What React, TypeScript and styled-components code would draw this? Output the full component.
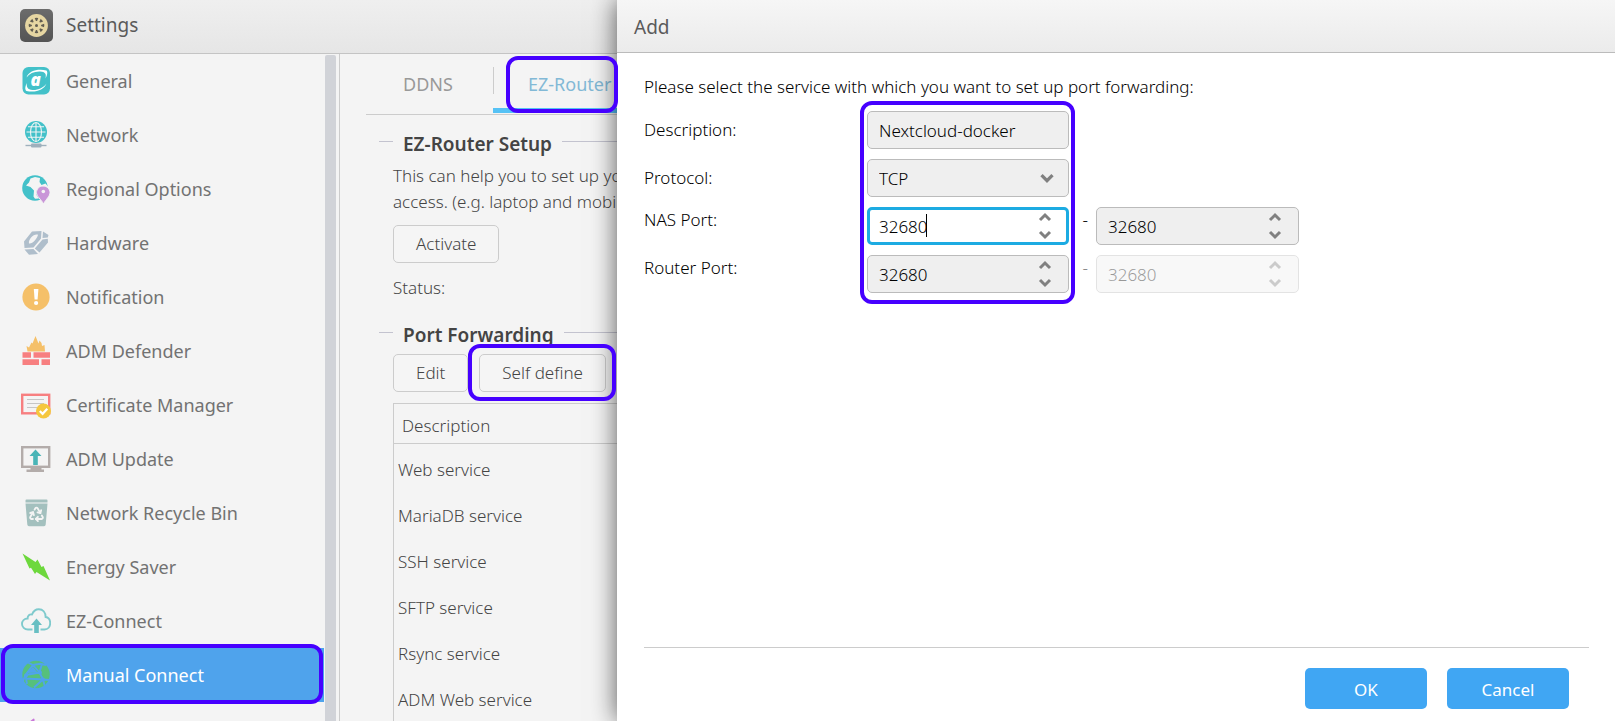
import React from 'react';
import styled, { createGlobalStyle, css } from 'styled-components';
import { Recycle } from 'lucide-react';

const GlobalStyle = createGlobalStyle`
  *, *::before, *::after { box-sizing: border-box; }
  body {
    margin: 0;
    overflow: hidden;
    background: #f4f4f4;
    color: #444;
    font-family: "Noto Sans", "Open Sans", sans-serif;
    font-size: 17px;
    font-weight: 350;
    line-height: 26px;
  }
  button, input, select { font: inherit; color: inherit; }
`;

/* ---------- shell ---------- */

const Desktop = styled.div`
  display: flex;
  height: 100vh;
`;

const SettingsWindow = styled.section`
  display: flex;
  flex-direction: column;
  flex: 0 0 617px;
  min-width: 0;
  overflow: clip;
  overflow-clip-margin: 2px;
`;

const SettingsHeader = styled.header`
  display: flex;
  align-items: center;
  gap: 13px;
  flex: 0 0 54px;
  padding: 0 20px 3px;
  border-bottom: 1px solid #c4c4c4;
  background: linear-gradient(#efefef, #e6e6e6);
`;

const WindowTitle = styled.h1`
  margin: 0;
  font-size: 19px;
  font-weight: 390;
  color: #5a5a5a;
`;

const SettingsBody = styled.div`
  display: flex;
  flex: 1;
  min-height: 0;
`;

const ring = css`
  border: 4px solid #4600ff;
  border-radius: 12px;
  pointer-events: none;
  z-index: 2;
`;

/* ---------- sidebar ---------- */

const Sidebar = styled.nav`
  display: flex;
  flex: 0 0 340px;
  border-right: 1px solid #ccc;
  overflow: clip;
`;

const NavList = styled.ul`
  flex: 0 0 324px;
  margin: 0;
  padding: 0;
  list-style: none;
`;

const NavLink = styled.a<{ $active?: boolean }>`
  position: relative;
  display: flex;
  align-items: center;
  gap: 15px;
  height: 54px;
  padding-left: 21px;
  font-size: 18px;
  font-weight: 390;
  color: #727272;
  text-decoration: none;
  ${p => p.$active && css`
    background: #4fa3ec;
    color: #fff;
    &::after {
      content: '';
      position: absolute;
      inset: -4px 1px -2px;
      ${ring}
    }
  `}
`;

const NavIconRow = styled.li`
  padding: 12px 21px;
`;

const ScrollThumb = styled.div`
  flex: 0 0 11px;
  margin: 1px 0 0 1px;
  border-radius: 2px 2px 0 0;
  background: #d1d3d8;
`;

/* ---------- manual connect pane ---------- */

const Pane = styled.main`
  flex: 1 0 auto;
  width: 277px;
  padding-left: 26px;
`;

const Tabs = styled.div`
  display: flex;
  height: 61px;
  border-bottom: 1px solid #ccc;
`;

const Tab = styled.button<{ $active?: boolean }>`
  position: relative;
  flex: ${p => (p.$active ? '1 0 124px' : '0 0 127px')};
  padding: 6px 0 0 ${p => (p.$active ? '35px' : '37px')};
  border: 0;
  border-bottom: ${p => (p.$active ? '5px solid #56c2f5' : '5px solid transparent')};
  margin-bottom: 1px;
  background: linear-gradient(#ccc, #ccc) no-repeat 0 13px / ${p => (p.$active ? '1px 27px' : '0 0')};
  font-size: 18px;
  font-weight: 390;
  text-align: left;
  white-space: nowrap;
  color: ${p => (p.$active ? '#82b9d6' : '#999')};
  ${p => p.$active && css`
    &::after {
      content: '';
      position: absolute;
      inset: 2px -1px -5px 13px;
      ${ring}
    }
  `}
`;

const Group = styled.section`
  padding: 17px 0 0 27px;
  white-space: nowrap;
  & + & { padding-top: 22px; }
`;

const GroupTitle = styled.h2`
  display: flex;
  align-items: center;
  gap: 10px;
  margin: 0 0 7px -14px;
  font-size: 19px;
  font-weight: 570;
  line-height: 24px;
  color: #444;
  &::before, &::after {
    content: '';
    flex: 1;
    border-top: 1px solid #c3c3cf;
    margin-bottom: 5px;
  }
  &::before { flex: 0 0 14px; }
`;

const Paragraph = styled.p`
  margin: 0;
`;

const Button = styled.button`
  height: 38px;
  padding: 0 22px;
  border: 1px solid #ccc;
  border-radius: 5px;
  background: #f5f5f5;
  color: #444;
`;

const ActivateRow = styled.div`
  padding: 10px 0 12px;
`;

const Toolbar = styled.div`
  display: flex;
  gap: 11px;
  margin-bottom: 11px;
`;

const Marked = styled.div`
  position: relative;
  &::after {
    content: '';
    position: absolute;
    inset: -10px -10px -9px -11px;
    ${ring}
  }
`;

const ServiceTable = styled.table`
  width: 100%;
  border: 1px solid #ccc;
  border-width: 1px 0 0 1px;
  border-spacing: 0;
  text-align: left;
  th {
    height: 40px;
    padding: 4px 8px 0;
    border-bottom: 1px solid #ccc;
    font-weight: inherit;
  }
  tbody::before {
    content: '';
    display: block;
    height: 3px;
  }
  td {
    height: 46px;
    padding: 0 4px;
  }
`;

/* ---------- dialog ---------- */

const Dialog = styled.form`
  position: relative;
  z-index: 1;
  display: flex;
  flex-direction: column;
  flex: 1;
  min-width: 0;
  background: #fff;
  box-shadow: 0 0 24px rgba(0, 0, 0, 0.65);
  color: #000;
`;

const DialogHeader = styled.header`
  flex: 0 0 53px;
  padding: 14px 17px 0;
  border-bottom: 1px solid #bbb;
  background: linear-gradient(#f6f6f6, #ebebeb);
`;

const DialogBody = styled.div`
  flex: 1;
  padding: 21px 26px 0 27px;
`;

const FormGrid = styled.div`
  display: grid;
  grid-template-columns: 223px 202px 27px 203px;
  grid-auto-rows: 38px;
  row-gap: 10px;
  margin-top: 11px;
`;

const Label = styled.label<{ $row: number; $raised?: boolean }>`
  grid-column: 1;
  grid-row: ${p => p.$row};
  line-height: ${p => (p.$raised ? 26 : 38)}px;
`;

const Dash = styled.span<{ $row: number; $dim?: boolean }>`
  grid-column: 3;
  grid-row: ${p => p.$row};
  padding-right: 8px;
  line-height: 26px;
  text-align: right;
  opacity: ${p => (p.$dim ? 0.5 : 1)};
`;

const FieldRing = styled.div`
  grid-column: 2;
  grid-row: 1 / 5;
  margin: -10px -6px -11px -7px;
  ${ring}
`;

const Field = styled.div<{ $row: number; $second?: boolean; $dim?: boolean }>`
  position: relative;
  grid-column: ${p => (p.$second ? 4 : 2)};
  grid-row: ${p => p.$row};
  display: flex;
  opacity: ${p => (p.$dim ? 0.4 : 1)};
`;

const control = css`
  width: 100%;
  min-width: 0;
  padding: 1px 11px 0;
  border: 1px solid #bbb;
  border-radius: 5px;
  background: #efefef;
  outline: none;
`;

const TextInput = styled.input<{ $focused?: boolean }>`
  ${control}
  ${p => p.$focused && css`
    padding: 1px 9px 0;
    border: 3px solid #1cabe2;
    background: #fff;
    caret-color: transparent;
  `}
`;

const Select = styled.select`
  ${control}
  appearance: none;
`;

const Caret = styled.span`
  position: absolute;
  top: 7px;
  left: 59px;
  width: 1px;
  height: 23px;
  background: #000;
`;

const Stepper = styled.span`
  position: absolute;
  top: 4px;
  right: 15px;
  display: flex;
  flex-direction: column;
  justify-content: space-between;
  height: 30px;
`;

const StepButton = styled.button`
  display: flex;
  padding: 1px 2px;
  border: 0;
  background: none;
`;

const SelectArrow = styled.span`
  position: absolute;
  top: 14px;
  right: 14px;
  display: flex;
  pointer-events: none;
`;

const DialogFooter = styled.footer`
  display: flex;
  justify-content: flex-end;
  gap: 20px;
  margin: 0 26px 0 27px;
  padding: 20px 20px 12px;
  border-top: 1px solid #ccc;
`;

const PrimaryButton = styled.button`
  width: 122px;
  height: 41px;
  padding-top: 3px;
  border: 0;
  border-radius: 5px;
  background: #40a6f3;
  color: #fff;
  font-weight: 390;
`;

/* ---------- icons ---------- */

const Icon = ({ children }: { children: React.ReactNode }) => (
  <svg width="30" height="30" viewBox="0 0 30 30" fill="none" aria-hidden="true">{children}</svg>
);

const TEAL = '#43c1c9';

const SettingsIcon = () => (
  <svg width="33" height="33" viewBox="0 0 33 33" aria-hidden="true">
    <defs>
      <linearGradient id="tile" x1="0" y1="0" x2="0" y2="1"><stop stopColor="#6c6c6c" /><stop offset="1" stopColor="#545454" /></linearGradient>
    </defs>
    <rect x="0" y="0" width="33" height="33" rx="5" fill="url(#tile)" />
    <circle cx="16.5" cy="16.5" r="11.4" fill="#e6d6a2" />
    <circle cx="16.5" cy="16.5" r="7.800" fill="#625e52" />
    <g stroke="#e6d6a2" strokeWidth="2.400">
      {[22.5, 67.5, 112.5, 157.5].map(a => (
        <path key={a} d="M16.5 7.5v18" transform={`rotate(${a} 16.5 16.5)`} />
      ))}
    </g>
    <circle cx="16.5" cy="16.5" r="4.600" fill="#e6d6a2" />
    <circle cx="16.5" cy="16.5" r="1.5" fill="#625e52" />
  </svg>
);

const GeneralIcon = () => (
  <Icon>
    <rect x="1.5" y="1" width="27.5" height="27.5" rx="6" fill={TEAL} />
    <text x="9.500" y="19.500" fill="#fff" fontFamily="Open Sans, sans-serif" fontWeight="800" fontStyle="italic" fontSize="17">a</text>
    <path d="M5.5 11.5C8 4.5 17 2.600 25.500 4.500C27 6 26.200 9.500 24.500 12.500C25.500 8 24.500 6 19 5.600C13 5.400 8.500 7.500 5.500 11.500Z" fill="#fff" />
    <path d="M25.500 17.500C23 24 15 26.800 5.500 25C3.500 23.600 4.200 20 6 17C5.200 21 6.500 23.600 11.500 24C17.500 24.200 22.500 21.500 25.500 17.500Z" fill="#fff" />
  </Icon>
);

const NetworkIcon = () => (
  <Icon>
    <circle cx="15" cy="12" r="11" fill={TEAL} />
    <g stroke="#f4f4f4" strokeWidth="1.100">
      <ellipse cx="15" cy="12" rx="5.500" ry="9.500" />
      <path d="M15 2.500v19M5.500 12h19M7 6.800h16M7 17.200h16" />
    </g>
    <path d="M4.500 25.500h21" stroke="#9fb0bc" strokeWidth="1.400" />
    <rect x="10" y="23.500" width="10.500" height="4" rx="1" fill="#9fb0bc" />
  </Icon>
);

const RegionalIcon = () => (
  <Icon>
    <circle cx="14" cy="14" r="12.800" fill={TEAL} />
    <path d="M9.500 4.500L14 3L19 4L18.500 8L20.500 11L24.500 9.500L27.500 13L20 14L15 17L15.500 21L18 24.500L14 24.800L12.500 22.500L13 16.500L9.500 13L5 11.500L8 8.500Z" fill="#f4f4f4" />
    <path d="M22 12C26 12 29 15 29 18.500C29 22.500 25 25 22.500 30C20 25 15.500 22.500 15.500 18.500C15.500 15 18 12 22 12Z" fill="#c996d8" stroke="#f4f4f4" strokeWidth="1" />
    <circle cx="22.300" cy="17.500" r="1.800" fill="#f4f4f4" />
  </Icon>
);

const HardwareIcon = () => (
  <Icon>
    <path fillRule="evenodd" fill="#afbecb" d="M3 13.500L11 3.500L20.500 3L20 10.500L12.500 19.500L3.500 20ZM8 15.500C11 16.500 16.500 10.500 17 6.800C13.500 5 7 11 8 15.500Z" />
    <path fill="#afbecb" d="M22 3.500L27.500 7L26.800 9.500L21.500 10ZM26.800 10.800L27 14.500L18.500 24.500L13.800 20.500L21.500 11.500ZM3.500 21.400L12.500 21L17 26L8 26.800Z" />
  </Icon>
);

const NotificationIcon = () => (
  <Icon>
    <circle cx="15" cy="15" r="13.600" fill="#f5c069" />
    <path d="M12.800 7h4.600l-.8 10.500h-3z" fill="#fff" />
    <circle cx="15.100" cy="21" r="2.100" fill="#fff" />
  </Icon>
);

const DefenderIcon = () => (
  <Icon>
    <path d="M6.500 15.500L5.500 10L8 11.500L10.500 6.500L11.500 7.500L14.500 0L17.500 7.500L18.500 4.500L20.500 7L21 10L23.500 9L24 15.500Z" fill="#f5c069" />
    <path d="M1.500 16.200h8.500v5.600h-8.500zM12.500 16.200h16.500v5.600h-16.500zM1.500 23.300h16.500v5.600h-16.500zM20.500 23.300h8.500v5.600h-8.500z" fill="#f77f80" />
  </Icon>
);

const CertificateIcon = () => (
  <Icon>
    <rect x="1.200" y="4.800" width="27" height="18.500" stroke="#f77f80" strokeWidth="2.400" />
    <path d="M6 9.500h17M6 13.500h17M6 17.500h10" stroke="#c6c6c6" strokeWidth="1.100" />
    <circle cx="22.500" cy="21" r="7.500" fill="#f5c73e" />
    <path d="M18.800 21l2.800 2.800 4.700-5" stroke="#fff" strokeWidth="2.200" />
  </Icon>
);

const UpdateIcon = () => (
  <Icon>
    <rect x="1.200" y="3.200" width="27" height="19.600" stroke="#b3acaa" strokeWidth="2.400" />
    <path d="M9.500 24h11v1.500h2.500v2.500h-17.500v-2.500h4z" fill="#b3acaa" />
    <path d="M14.500 5.500l6 6.500h-3.700v9h-4.600v-9h-3.700z" fill="#49b5b7" />
  </Icon>
);

const RecycleIcon = () => (
  <Icon>
    <path d="M4.500 2.500Q4.500 1.500 5.500 1.500h20Q26.500 1.500 26.500 2.500v2h-22zM4.500 5.400h22l-1.800 21.200Q24.500 28.200 23 28.200h-15Q6.500 28.200 6.300 26.600z" fill="#a3c0be" />
    <Recycle x={7} y={7.500} width={17} height={17} color="#f4f4f4" strokeWidth={2.600} />
  </Icon>
);

const EnergyIcon = () => (
  <Icon>
    <path d="M1.500 1.500L14.500 10L16.500 7.500L20.500 15L22.500 14L29 28.500L15.500 20L14 22L10 15.800L8.500 16.500Z" fill="#6dd83c" />
  </Icon>
);

const ConnectIcon = () => (
  <Icon>
    <path d="M11.500 23.500H7C3.500 23.500 1 21 1 18C1 15 3.300 12.500 6.600 12.500C6.600 9.500 8.500 8 11 8.500C12.300 5 14.800 3.200 17.800 3.200C21.800 3.200 24.600 6.200 24.600 11C27.500 11.500 29.200 14 29.200 17C29.200 20.800 26.800 23.500 23.500 23.500H19.500" stroke="#7fcacd" strokeWidth="1.900" />
    <path d="M15.500 12.500l5.500 6.500h-3.200v8h-4.600v-8h-3.200z" fill="#68bfc3" />
  </Icon>
);

const ManualIcon = () => (
  <Icon>
    <circle cx="15" cy="14.500" r="13.700" fill="#56c07c" />
    <g stroke="#4fa3ec" strokeWidth="1.900">
      <path d="M7 2.500L12 5L19 3.800L25 5M12 5L4.500 15L2 21M4.500 15L18.500 12.500L12 5M18.500 12.500L22 19.500L28 20M22 19.500L13 27.500M22 19.500L4.500 18.500M18.500 12.500L21 3.500M4.500 15L6 24M22 19.500L24 27" />
    </g>
    <path d="M6 13l6-6 4.500 5.500z" fill="#4fa3ec" />
    <circle cx="5" cy="15.500" r="1.900" fill="#4fa3ec" />
    <circle cx="19" cy="12.500" r="1.900" fill="#4fa3ec" />
    <circle cx="22" cy="19.500" r="1.900" fill="#4fa3ec" />
  </Icon>
);

const SpeakerIcon = () => (
  <Icon>
    <path d="M4 11L12.500 4.500L13.500 5V25L4 19Z" fill="#c977d8" />
  </Icon>
);

const Chevron = ({ up, large }: { up?: boolean; large?: boolean }) => (
  <svg width={large ? 16 : 14} height={large ? 11 : 10} viewBox="0 0 14 10" fill="none" aria-hidden="true">
    <path d={up ? 'M2 8l5-5 5 5' : 'M2 2l5 5 5-5'} stroke="#808080" strokeWidth="3" />
  </svg>
);

/* ---------- content ---------- */

const navItems: [string, React.ComponentType][] = [
  ['General', GeneralIcon],
  ['Network', NetworkIcon],
  ['Regional Options', RegionalIcon],
  ['Hardware', HardwareIcon],
  ['Notification', NotificationIcon],
  ['ADM Defender', DefenderIcon],
  ['Certificate Manager', CertificateIcon],
  ['ADM Update', UpdateIcon],
  ['Network Recycle Bin', RecycleIcon],
  ['Energy Saver', EnergyIcon],
  ['EZ-Connect', ConnectIcon],
  ['Manual Connect', ManualIcon],
];

const services = ['Web service', 'MariaDB service', 'SSH service', 'SFTP service', 'Rsync service', 'ADM Web service'];

interface PortFieldProps {
  id: string;
  row: number;
  second?: boolean;
  focused?: boolean;
  disabled?: boolean;
}

const PortField = ({ id, row, second, focused, disabled }: PortFieldProps) => (
  <Field $row={row} $second={second} $dim={disabled}>
    <TextInput
      id={id}
      aria-labelledby={`label-${row}`}
      inputMode="numeric"
      defaultValue="32680"
      disabled={disabled}
      $focused={focused}
    />
    {focused && <Caret />}
    <Stepper>
      <StepButton type="button" disabled={disabled}><Chevron up /></StepButton>
      <StepButton type="button" disabled={disabled}><Chevron /></StepButton>
    </Stepper>
  </Field>
);

export default function App() {
  return (
    <Desktop>
      <GlobalStyle />
      <SettingsWindow>
        <SettingsHeader>
          <SettingsIcon />
          <WindowTitle>Settings</WindowTitle>
        </SettingsHeader>
        <SettingsBody>
          <Sidebar>
            <NavList>
              {navItems.map(([name, Glyph]) => (
                <li key={name}>
                  <NavLink href="#" $active={name === 'Manual Connect'}>
                    <Glyph />
                    {name}
                  </NavLink>
                </li>
              ))}
              <NavIconRow><SpeakerIcon /></NavIconRow>
            </NavList>
            <ScrollThumb />
          </Sidebar>
          <Pane>
            <Tabs>
              <Tab type="button">DDNS</Tab>
              <Tab type="button" $active>EZ-Router</Tab>
            </Tabs>
            <Group>
              <GroupTitle>EZ-Router Setup</GroupTitle>
              <Paragraph>
                This can help you to set up yo
                <br />
                access. (e.g. laptop and mobi
              </Paragraph>
              <ActivateRow><Button type="button">Activate</Button></ActivateRow>
              <Paragraph>Status:</Paragraph>
            </Group>
            <Group>
              <GroupTitle>Port Forwarding</GroupTitle>
              <Toolbar>
                <Button type="button">Edit</Button>
                <Marked><Button type="button">Self define</Button></Marked>
              </Toolbar>
              <ServiceTable>
                <thead><tr><th scope="col">Description</th></tr></thead>
                <tbody>
                  {services.map(s => <tr key={s}><td>{s}</td></tr>)}
                </tbody>
              </ServiceTable>
            </Group>
          </Pane>
        </SettingsBody>
      </SettingsWindow>

      <Dialog>
        <DialogHeader><WindowTitle as="h2">Add</WindowTitle></DialogHeader>
        <DialogBody>
          <Paragraph>Please select the service with which you want to set up port forwarding:</Paragraph>
          <FormGrid>
            <Label $row={1} htmlFor="description">Description:</Label>
            <Field $row={1}><TextInput id="description" defaultValue="Nextcloud-docker" /></Field>

            <Label $row={2} htmlFor="protocol">Protocol:</Label>
            <Field $row={2}>
              <Select id="protocol" defaultValue="TCP"><option>TCP</option></Select>
              <SelectArrow><Chevron large /></SelectArrow>
            </Field>

            <Label $row={3} $raised id="label-3" htmlFor="nas-start">NAS Port:</Label>
            <PortField id="nas-start" row={3} focused />
            <Dash $row={3}>-</Dash>
            <PortField id="nas-end" row={3} second />

            <Label $row={4} $raised id="label-4" htmlFor="router-start">Router Port:</Label>
            <PortField id="router-start" row={4} />
            <Dash $row={4} $dim>-</Dash>
            <PortField id="router-end" row={4} second disabled />

            <FieldRing />
          </FormGrid>
        </DialogBody>
        <DialogFooter>
          <PrimaryButton type="button">OK</PrimaryButton>
          <PrimaryButton type="button">Cancel</PrimaryButton>
        </DialogFooter>
      </Dialog>
    </Desktop>
  );
}
